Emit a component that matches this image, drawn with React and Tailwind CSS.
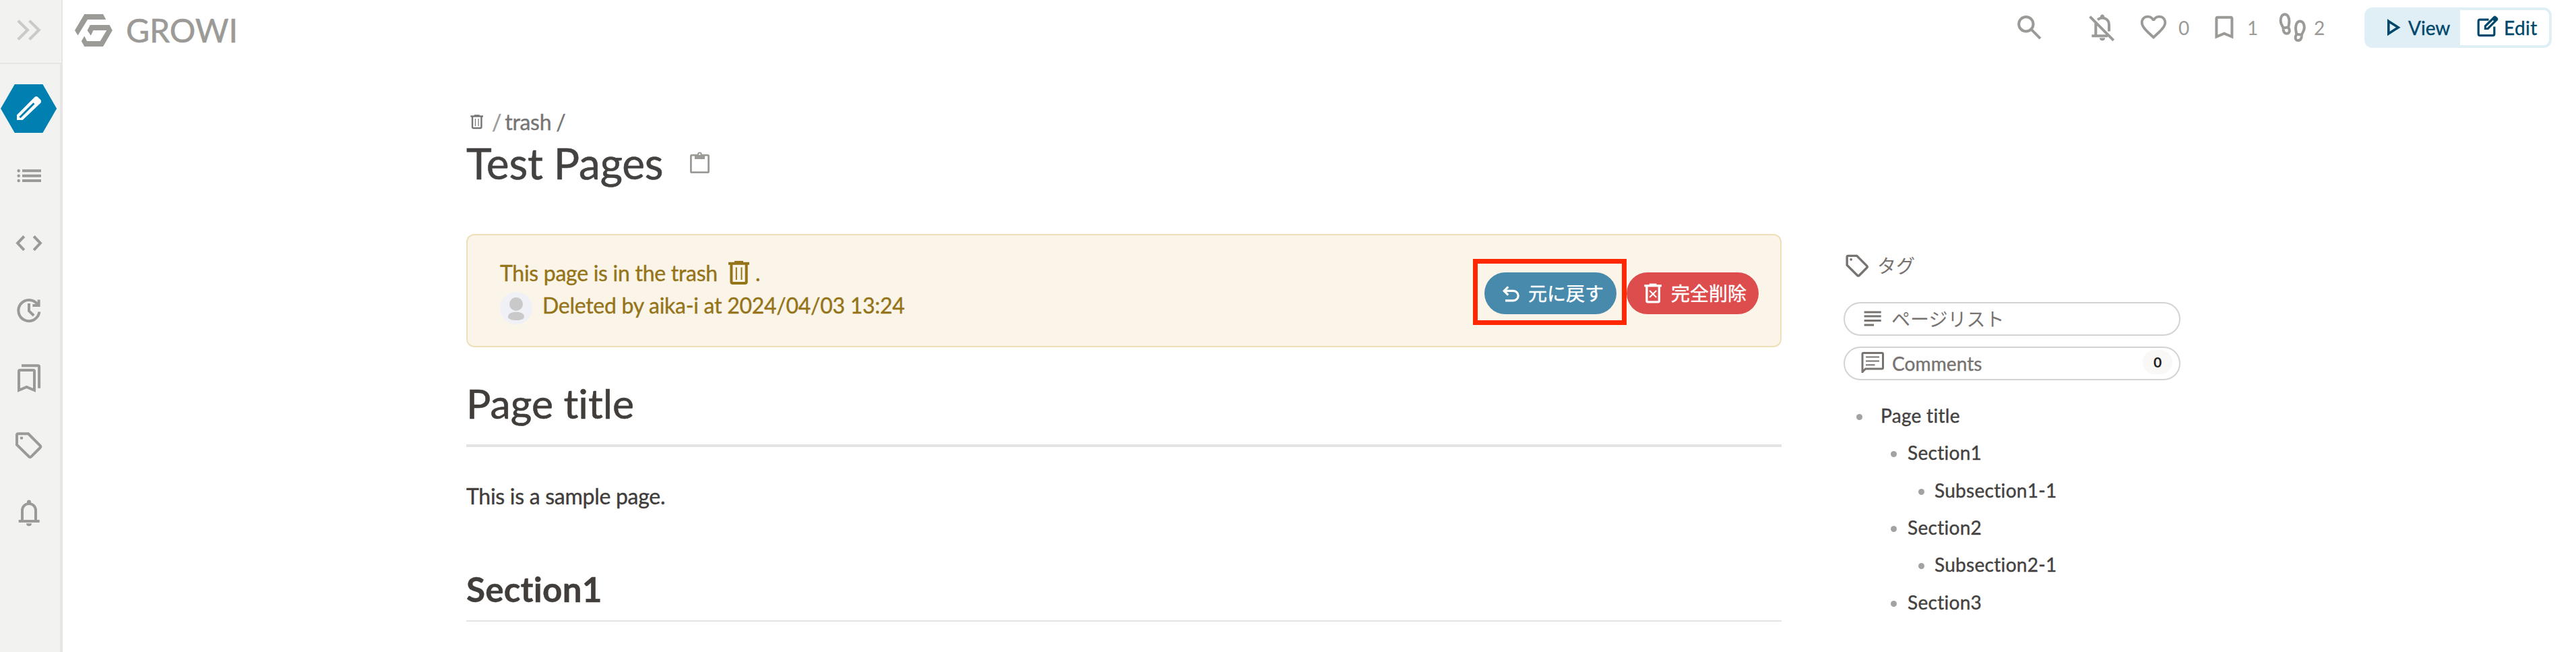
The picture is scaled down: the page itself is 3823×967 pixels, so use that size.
import React from "react";

function Svg({ w, h, className = "", sw = 4, children, filled = false }) {
  return (
    <svg
      width={w}
      height={h || w}
      viewBox={`0 0 ${w} ${h || w}`}
      fill={filled ? "currentColor" : "none"}
      stroke={filled ? "none" : "currentColor"}
      strokeWidth={sw}
      className={`block shrink-0 ${className}`}
    >
      {children}
    </svg>
  );
}

const TAG_PATH =
  "M6 8.3q0-2 2-2H23L40.5 23.8q1.5 1.6 0 3.2L27.2 40.3q-1.6 1.5-3.2 0L6 22.6Z";

function TagIcon({ size = 48 }) {
  return (
    <svg width={size} height={size} viewBox="0 0 48 48" fill="none" stroke="currentColor" strokeWidth="4" className="block shrink-0">
      <path d={TAG_PATH} />
      <circle cx="13" cy="12.6" r="2.2" fill="currentColor" stroke="none" />
    </svg>
  );
}

function TrashIcon({ size = 40, forever = false, className = "" }) {
  return (
    <svg width={size} height={size} viewBox="0 0 40 40" fill="none" stroke="currentColor" strokeWidth="4" className={`block shrink-0 ${className}`}>
      <path d="M4 5.8H35" />
      <path d="M13 3.4H26" strokeWidth="3" />
      <path d="M8.4 6V33q0 2 2 2H28.7q2 0 2-2V6" />
      {forever ? (
        <path d="M13.5 14.5L25.7 26.7M25.7 14.5L13.5 26.7" strokeWidth="2.4" />
      ) : (
        <path d="M15.8 11.5V30M23.5 11.5V30" strokeWidth="2" />
      )}
    </svg>
  );
}

function SidebarItem({ children }) {
  return <div className="flex h-[100px] w-[86px] items-center justify-center">{children}</div>;
}

function Sidebar() {
  return (
    <aside className="flex h-[967px] w-[93px] shrink-0 flex-col bg-[#f2f2f0] text-[#9b9a97]">
      <div className="flex h-[95px] shrink-0 border-r-2 border-b-2 border-[#e6e6e5] pt-[21px] pl-[19px] text-[#cacac8]">
        <Svg w={48} sw={4.2}>
          <path d="M7.8 9.7L21.9 23.6L7.8 37.5M24.6 9.7L38.7 23.6L24.6 37.5" />
        </Svg>
      </div>
      <nav className="flex flex-1 flex-col border-r-4 border-[#e6e6e5] pt-[16px]">
        <div className="flex h-[100px] pt-[14px] pl-[1px]">
          <svg width="83" height="72" viewBox="0 0 83 72" className="block">
            <path d="M0 36L20.8 0H62.4L83.2 36L62.4 72H20.8Z" fill="#007fb1" />
            <path d="M24 53v-7.6L50.2 19.2q2.6-2.2 5.2 0l3.6 3.6q2.2 2.6 0 5.2L32.6 53z" fill="#fff" />
            <path d="M28.4 49.2L49.5 28.2" stroke="#007fb1" strokeWidth="3" />
          </svg>
        </div>
        <SidebarItem>
          <Svg w={48}>
            <path d="M14 16.3H42M14 23.7H42M14 31H42" />
            <g fill="currentColor" stroke="none">
              <circle cx="8.7" cy="16.3" r="2.2" />
              <circle cx="8.7" cy="23.7" r="2.2" />
              <circle cx="8.7" cy="31" r="2.2" />
            </g>
          </Svg>
        </SidebarItem>
        <SidebarItem>
          <Svg w={48}>
            <path d="M16.8 13.5L7.1 23.6L16.8 33.8M31.2 13.5L40.9 23.6L31.2 33.8" />
          </Svg>
        </SidebarItem>
        <SidebarItem>
          <Svg w={48}>
            <path d="M39.4 25.6A15.6 15.6 0 1 1 37 15" />
            <path d="M29.4 15.9H38.6V7.6" />
            <path d="M24 13V24.2L31.2 31" />
          </Svg>
        </SidebarItem>
        <SidebarItem>
          <Svg w={48}>
            <path d="M9 41.8V13.5q0-1.5 1.5-1.5H30.5q1.5 0 1.5 1.5V41.8L20.5 37Z" />
            <path d="M13 5.3H37.4q1.7 0 1.7 1.7V38.8" />
          </Svg>
        </SidebarItem>
        <SidebarItem>
          <TagIcon />
        </SidebarItem>
        <SidebarItem>
          <Svg w={48}>
            <path d="M8.7 36H39.7M14 36V20a10 10 0 0 1 20 0V36" />
            <g fill="currentColor" stroke="none">
              <circle cx="24" cy="7.4" r="3" />
              <path d="M20 39.2h8a4 4 0 0 1-8 0" />
            </g>
          </Svg>
        </SidebarItem>
      </nav>
    </aside>
  );
}

const FOOT =
  "M13 6.3C17 6.3 19.4 11 19.4 16.5C19.4 20 18.6 22 18.2 25.2L10.6 26.8C9.6 23 6.6 20.5 6.6 16C6.6 10 9 6.3 13 6.3Z M10.6 26.8C10.4 32 12.3 34.8 15.7 34.8C19 34.8 20.2 32 19.7 29.6C19.3 27.5 18.4 26.8 18.2 25.2";

function Header() {
  return (
    <header className="flex h-[92px] shrink-0 items-start text-[#9b9a97]">
      <div className="flex pt-[21px] pl-[18px]">
        <Svg w={56} h={48} filled>
          <path d="M14.3 0H42L46.3 8H19L4.5 31.5L0 24Z" />
          <path d="M22.8 16H51.5L55.8 24L42 48H14.3L9.8 40L14.3 32.5L18 40H37.7L47.3 24H27.5L23.8 31.8L18.6 24Z" />
        </Svg>
        <span className="-mt-[4px] ml-[20px] text-[48px] leading-[56px] whitespace-nowrap [-webkit-text-stroke:0.6px]">GROWI</span>
      </div>
      <div className="ml-auto flex pt-[17px] text-[28px] leading-[48px]">
        <Svg w={48}>
          <circle cx="18.8" cy="18.7" r="10.7" />
          <path d="M26.3 26.3L40 40.2" />
        </Svg>
        <Svg w={48} className="ml-[60px]">
          <path d="M17.2 12.4A9.9 9.9 0 0 1 34 20V29.4M14.3 36V15M8.3 36.2H32M5.6 7.6L40.7 42.9" />
          <g fill="currentColor" stroke="none">
            <circle cx="24" cy="7.5" r="3" />
            <path d="M20 39.2h8a4 4 0 0 1-8 0" />
          </g>
        </Svg>
        <svg width="46" height="46" viewBox="0 0 24 24" fill="currentColor" className="ml-[29px] block shrink-0">
          <path d="M16.5 3c-1.74 0-3.41.81-4.5 2.09C10.91 3.81 9.24 3 7.5 3 4.42 3 2 5.42 2 8.5c0 3.78 3.4 6.86 8.55 11.54L12 21.35l1.45-1.32C18.6 15.36 22 12.28 22 8.5 22 5.42 19.58 3 16.5 3zm-4.4 15.55l-.1.1-.1-.1C7.14 14.24 4 11.39 4 8.5 4 6.5 5.5 5 7.5 5c1.54 0 3.04.99 3.57 2.36h1.87C13.46 5.99 14.96 5 16.5 5c2 0 3.5 1.5 3.5 3.5 0 2.89-3.14 5.74-7.9 10.05z" />
        </svg>
        <span className="ml-[14px] w-[20px]">0</span>
        <Svg w={48} className="ml-[24px]">
          <path d="M12.4 37.5V10.5q0-1.8 1.8-1.8H33.6q1.8 0 1.8 1.8V37.5L23.9 32.7Z" />
        </Svg>
        <span className="ml-[10px] w-[20px]">1</span>
        <Svg w={48} className="-mt-[2px] ml-[23px]">
          <path d={FOOT} />
          <path d={FOOT} transform="translate(48.4 10.2) scale(-1 1)" />
        </Svg>
        <span className="ml-[8px] w-[20px]">2</span>
      </div>
      <div className="mt-[11px] mr-[36px] ml-[55px] flex h-[60px] w-[278px] overflow-hidden rounded-[12px] border-4 border-[#e0eef5] text-[28px] leading-[52px] text-[#00486b] [-webkit-text-stroke:0.4px]">
        <div className="flex w-[138px] bg-[#e0eef5] pl-[22px]">
          <Svg w={32} h={48} sw={3.6} className="mt-[2px]">
            <path d="M9.8 14.4L24.2 23.7L9.8 33Z" />
          </Svg>
          <span className="ml-[7px]">View</span>
        </div>
        <div className="flex pl-[22px]">
          <Svg w={40} sw={3.2} className="mt-[4px]">
            <path d="M20.5 10.2H7.5q-2.3 0-2.3 2.3V31.5q0 2.2 2.3 2.2H26.5q2.3 0 2.3-2.2V20.5" />
            <path d="M13.8 25V18.9L27.4 5.5q2.1-2 4.2 0l1.8 1.8q2 2.1 0 4.2L19.9 25Z" fill="currentColor" stroke="none" />
            <path d="M17.1 21.8L27.4 11.6" stroke="#fff" strokeWidth="2" />
          </Svg>
          <span className="ml-[3px] tracking-[0.4px]">Edit</span>
        </div>
      </div>
    </header>
  );
}

function TrashAlert() {
  return (
    <div className="mt-[67px] flex h-[168px] justify-between rounded-[12px] border-2 border-[#efdfb8] bg-[#fbf4e8] pr-[32px] pl-[48px] text-[#957419]">
      <div className="pt-[32px] text-[32px] leading-[48px] tracking-[-0.28px] whitespace-nowrap [-webkit-text-stroke:0.4px]">
        <div className="flex h-[48px]">
          <span>This page is in the trash</span>
          <TrashIcon className="mt-[4px] ml-[12px]" />
          <span className="ml-[4px]">.</span>
        </div>
        <div className="flex h-[48px]">
          <svg width="48" height="48" viewBox="0 0 48 48" className="mt-[4px] block shrink-0">
            <circle cx="24" cy="24" r="24" fill="#eff1f6" />
            <circle cx="24" cy="18" r="10" fill="#c9c9c9" />
            <path d="M12 37c0-5 5-7.2 12-7.2s12 2.2 12 7.2c0 3-5 5-12 5s-12-2-12-5z" fill="#c9c9c9" />
          </svg>
          <span className="ml-[15px]">Deleted by aika-i at 2024/04/03 13:24</span>
        </div>
      </div>
      <div className="flex pt-[55px] text-[28px] leading-[62px] text-white">
        <button className="relative flex h-[62px] w-[196px] rounded-full bg-[#478aac] pl-[23px]">
          <Svg w={34} sw={3.2} className="mt-[15px]">
            <path d="M12.3 6.3L6.2 12.4L12.3 18.6M6.2 12.4H20a7.2 7.2 0 0 1 0 14.4H8" />
          </Svg>
          <span className="ml-[8px] whitespace-nowrap">元に戻す</span>
          <span className="absolute -top-[20px] -left-[17px] h-[98px] w-[228px] border-[7px] border-[#ff2800]" />
        </button>
        <button className="ml-[15px] flex h-[62px] w-[196px] rounded-full bg-[#dd4d4d] pl-[23px]">
          <TrashIcon size={33} forever className="mt-[15px]" />
          <span className="ml-[10px] whitespace-nowrap">完全削除</span>
        </button>
      </div>
    </div>
  );
}

function Article() {
  return (
    <article className="ml-[599px] w-[1952px] shrink-0 pt-[69px] text-[#403d3a] [-webkit-text-stroke:0.4px]">
      <div className="flex h-[43px] pl-[4px] text-[32px] leading-[40px] tracking-[-0.28px] text-[#777573]">
        <TrashIcon size={24} className="mt-[8px]" />
        <span className="ml-[10px] text-[#9b9a97]">/</span>
        <span className="ml-[5px]">trash</span>
        <span className="ml-[7px]">/</span>
      </div>
      <div className="flex h-[76px] text-[#444240]">
        <h1 className="text-[64px] leading-[76px] tracking-[-0.2px] whitespace-nowrap [-webkit-text-stroke:0.6px]">Test Pages</h1>
        <Svg w={40} sw={2.8} className="mt-[17px] ml-[35px] text-[#9b9a97]">
          <rect x="6.4" y="9.1" width="26.2" height="25.6" rx="1.5" />
          <path d="M12 8h15v7H12z" fill="currentColor" stroke="none" />
          <circle cx="19.4" cy="7.8" r="2.3" strokeWidth="2" fill="#fff" />
        </Svg>
      </div>
      <TrashAlert />
      <h1 className="mt-[47px] border-b-4 border-[#e5e3e1] pb-[25px] text-[60.8px] leading-[72px] [font-variant-ligatures:none] [-webkit-text-stroke:0.6px]">Page title</h1>
      <p className="mt-[49px] text-[32px] leading-[48px] tracking-[-0.28px]">This is a sample page.</p>
      <h2 className="mt-[81px] border-b-2 border-[#e3e3e3] pb-[15px] text-[51.2px] leading-[64px] font-bold tracking-[0.2px]">Section1</h2>
    </article>
  );
}

const TOC = [
  ["Page title", "pl-[19px]", "ml-[27px]"],
  ["Section1", "pl-[70px]", "ml-[16px]"],
  ["Subsection1-1", "pl-[111px]", "ml-[15px]"],
  ["Section2", "pl-[70px]", "ml-[16px]"],
  ["Subsection2-1", "pl-[111px]", "ml-[15px]"],
  ["Section3", "pl-[70px]", "ml-[16px]"],
];

function SidePanel() {
  return (
    <aside className="ml-[92px] w-[500px] shrink-0 pt-[282px] text-[28px] text-[#777371] [-webkit-text-stroke:0.4px]">
      <div className="flex h-[74px] leading-[40px] [-webkit-text-stroke:0px]">
        <TagIcon size={41} />
        <span className="ml-[9px]">タグ</span>
      </div>
      <div className="flex h-[50px] rounded-full border-2 border-[#d3d3d3] pl-[28px] leading-[46px] [-webkit-text-stroke:0px]">
        <Svg w={26} h={24} sw={3} className="mt-[10px]">
          <path d="M.6 3H25.7M.6 9H25.7M.6 15.5H25.7M.6 22H15" />
        </Svg>
        <span className="ml-[15px]">ページリスト</span>
      </div>
      <div className="mt-[16px] flex h-[50px] rounded-full border-2 border-[#d3d3d3] pr-[10px] pl-[22px] leading-[46px]">
        <Svg w={38} sw={3} className="mt-[3px]">
          <path d="M4 34V6q0-1.5 1.5-1.5H33q1.5 0 1.5 1.5V26.6q0 1.5-1.5 1.5H8.5L4 32.5" />
          <path d="M9 10.5H29M9 16.5H29M9 22.2H22.5" strokeWidth="2" />
        </Svg>
        <span className="ml-[10px] tracking-[0.1px]">Comments</span>
        <span className="mt-[3px] ml-auto h-[36px] w-[44px] rounded-full bg-[#f9f8f7] text-center text-[21px] leading-[36px] font-bold text-[#22211f] [-webkit-text-stroke:0px]">
          0
        </span>
      </div>
      <ul className="pt-[25px] tracking-[0.3px] text-[#444240]">
        {TOC.map(([label, pad, gap]) => (
          <li key={label} className={`flex h-[55.3px] items-center leading-[55px] ${pad}`}>
            <span className="mt-[4px] h-[9px] w-[9px] rounded-full bg-[#a3a2a0]" />
            <span className={gap}>{label}</span>
          </li>
        ))}
      </ul>
    </aside>
  );
}

export default function App() {
  return (
    <div className="flex h-[967px] w-[3823px] overflow-hidden bg-white font-['Lato','Noto_Sans_CJK_JP',sans-serif]">
      <Sidebar />
      <main className="flex flex-1 flex-col">
        <Header />
        <div className="flex flex-1">
          <Article />
          <SidePanel />
        </div>
      </main>
    </div>
  );
}
